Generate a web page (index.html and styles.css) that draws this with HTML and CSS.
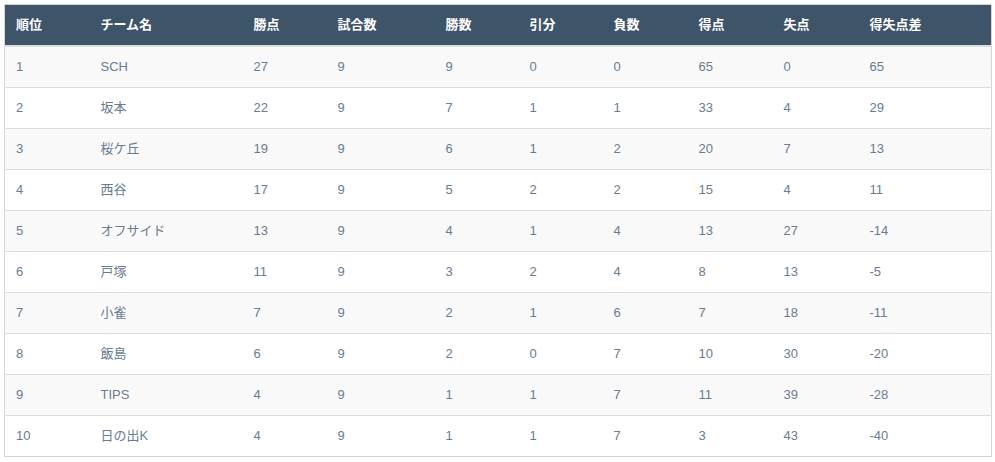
FILE: index.html
```html
<!DOCTYPE html>
<html lang="ja">
<head>
<meta charset="utf-8">
<link rel="stylesheet" href="styles.css">
</head>
<body>
<div class="wrap">
<table class="standings">
<colgroup>
<col class="c-rank"><col class="c-team"><col class="c-pts"><col class="c-gp"><col class="c-w"><col class="c-d"><col class="c-l"><col class="c-gf"><col class="c-ga"><col class="c-gd">
</colgroup>
<thead>
<tr><th>順位</th><th>チーム名</th><th>勝点</th><th>試合数</th><th>勝数</th><th>引分</th><th>負数</th><th>得点</th><th>失点</th><th>得失点差</th></tr>
</thead>
<tbody>
<tr><td>1</td><td>SCH</td><td>27</td><td>9</td><td>9</td><td>0</td><td>0</td><td>65</td><td>0</td><td>65</td></tr>
<tr><td>2</td><td>坂本</td><td>22</td><td>9</td><td>7</td><td>1</td><td>1</td><td>33</td><td>4</td><td>29</td></tr>
<tr><td>3</td><td>桜ケ丘</td><td>19</td><td>9</td><td>6</td><td>1</td><td>2</td><td>20</td><td>7</td><td>13</td></tr>
<tr><td>4</td><td>西谷</td><td>17</td><td>9</td><td>5</td><td>2</td><td>2</td><td>15</td><td>4</td><td>11</td></tr>
<tr><td>5</td><td>オフサイド</td><td>13</td><td>9</td><td>4</td><td>1</td><td>4</td><td>13</td><td>27</td><td>-14</td></tr>
<tr><td>6</td><td>戸塚</td><td>11</td><td>9</td><td>3</td><td>2</td><td>4</td><td>8</td><td>13</td><td>-5</td></tr>
<tr><td>7</td><td>小雀</td><td>7</td><td>9</td><td>2</td><td>1</td><td>6</td><td>7</td><td>18</td><td>-11</td></tr>
<tr><td>8</td><td>飯島</td><td>6</td><td>9</td><td>2</td><td>0</td><td>7</td><td>10</td><td>30</td><td>-20</td></tr>
<tr><td>9</td><td>TIPS</td><td>4</td><td>9</td><td>1</td><td>1</td><td>7</td><td>11</td><td>39</td><td>-28</td></tr>
<tr><td>10</td><td>日の出K</td><td>4</td><td>9</td><td>1</td><td>1</td><td>7</td><td>3</td><td>43</td><td>-40</td></tr>
</tbody>
</table>
</div>
</body>
</html>
```
FILE: styles.css
```css
html, body {
  margin: 0;
  padding: 0;
  background: #ffffff;
}
.wrap {
  padding: 4px 3px 4px 4px;
}
.standings {
  width: 988px;
  border-collapse: collapse;
  table-layout: fixed;
  border: 1px solid #d4d4d4;
  font-family: "Liberation Sans", Arial, "Noto Sans CJK JP", sans-serif;
  font-size: 13px;
  line-height: 18px;
}
.c-rank { width: 85px; }
.c-team { width: 153px; }
.c-pts { width: 84px; }
.c-gp { width: 108px; }
.c-w { width: 84px; }
.c-d { width: 84px; }
.c-l { width: 85px; }
.c-gf { width: 85px; }
.c-ga { width: 86px; }
.c-gd { width: auto; }
.standings th {
  background: #3e5468;
  color: #ffffff;
  font-weight: bold;
  text-align: left;
  height: 41px;
  padding: 0 11px;
  box-sizing: border-box;
  vertical-align: middle;
  border-bottom: 2px solid #dddddd;
}
.standings td {
  color: #697c90;
  text-align: left;
  height: 41px;
  padding: 0 11px;
  box-sizing: border-box;
  border-top: 1px solid #dddddd;
  vertical-align: middle;
}
.standings tbody tr:first-child td {
  border-top: 2px solid #dddddd;
  height: 42px;
}
.standings tbody tr:nth-child(odd) td {
  background: #f9f9f9;
}
```
